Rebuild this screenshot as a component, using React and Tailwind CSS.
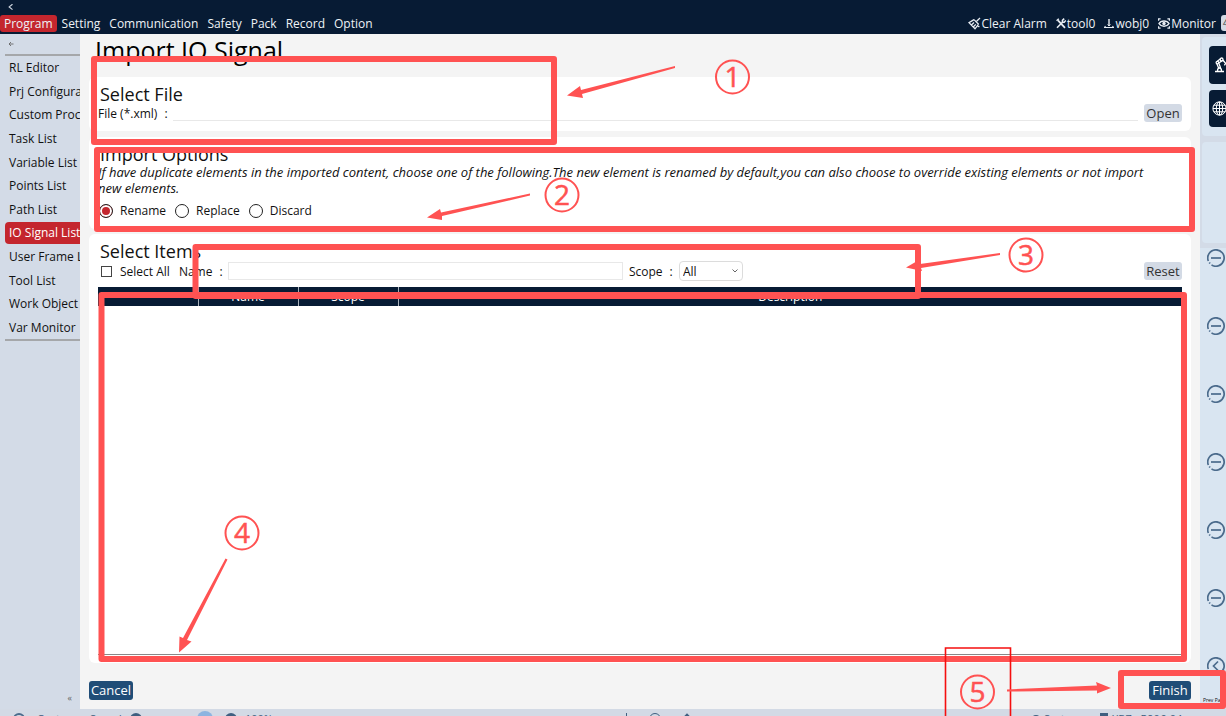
import React from "react";

const MENU = ["Program", "Setting", "Communication", "Safety", "Pack", "Record", "Option"];

const SIDE = [
  "RL Editor",
  "Prj Configuration",
  "Custom Process",
  "Task List",
  "Variable List",
  "Points List",
  "Path List",
  "IO Signal List",
  "User Frame List",
  "Tool List",
  "Work Object List",
  "Var Monitor",
];

function BroomIcon() {
  return (
    <svg width="13" height="13" viewBox="0 0 13 13" fill="none" stroke="#e8edf3" strokeWidth="1.3" aria-hidden="true">
      <path d="M12 1L8.6 4.2M6 2.6L10.6 7.2M6 2.6L1 5.6L7 11.8L10.6 7.2M3.4 8L6 5.6M5.200 10L7.800 7.400" />
      <path d="M9.5 9.500h2" />
    </svg>
  );
}

function ToolsIcon() {
  return (
    <svg width="10" height="11" viewBox="0 0 10 11" fill="none" stroke="#e8edf3" aria-hidden="true">
      <path d="M2 2.4L9 9.8" strokeWidth="1.8" />
      <path d="M1 9.8L6.8 4" strokeWidth="1.6" />
      <path d="M.6 2.8L2.8 .8M8.2 .6L6.4 2.4V4.200H8.2L9.8 2.4" strokeWidth="1.5" />
    </svg>
  );
}

function WobjIcon() {
  return (
    <svg width="10" height="11" viewBox="0 0 10 11" fill="none" stroke="#e8edf3" aria-hidden="true">
      <path d="M5 1V8" strokeWidth="1.400" />
      <path d="M3.600 6.500L5 8L6.400 6.500" strokeWidth="1" />
      <path d="M1.500 8L.5 9.500H9.500L8.500 8" strokeWidth="1.200" />
    </svg>
  );
}

function EyeIcon() {
  return (
    <svg width="12" height="11" viewBox="0 0 12 11" fill="none" stroke="#e8edf3" aria-hidden="true">
      <path d="M.6 2.8V.8H2.6M9.4 .8h2v2M11.4 8.2v2h-2M2.6 10.2h-2v-2" strokeWidth="1.2" />
      <path d="M1 5.5C3 2 9 2 11 5.5C9 9 3 9 1 5.5Z" strokeWidth="1.5" />
      <circle cx="6" cy="5.5" r="1.7" fill="#e8edf3" stroke="none" />
    </svg>
  );
}

function RobotIcon() {
  return (
    <svg width="20" height="18" viewBox="0 0 20 18" fill="none" stroke="#fff" strokeWidth="1.3" aria-hidden="true" className="shrink-0">
      <path d="M2 15.500h9" strokeWidth="1.600" />
      <path d="M4.500 15c0-2 .8-3 2-3s2 1 2 3M5.600 12L3.800 7.500M7.600 12L5.600 6.600M4 5.600L7.500 2.800M5.600 7L9.400 4.600" />
      <circle cx="4.400" cy="6.600" r="1.300" fill="#071b34" />
      <circle cx="8.600" cy="3.400" r="1.400" fill="#071b34" />
      <path d="M9.800 4L12.600 7.400M12.600 7.400l-1.200 2M12.600 7.400l2.400 .6" />
    </svg>
  );
}

function GlobeIcon() {
  return (
    <svg width="15" height="15" viewBox="0 0 15 15" fill="none" stroke="#fff" strokeWidth="1" aria-hidden="true" className="shrink-0">
      <circle cx="7.500" cy="7.500" r="6.600" />
      <ellipse cx="7.500" cy="7.500" rx="3.200" ry="6.600" />
      <path d="M7.500 1v13M1 7.500h13M1.900 4.200h11.200M1.900 10.800h11.200" />
    </svg>
  );
}

function AxisIcon({ back }) {
  return (
    <svg width="18" height="18" viewBox="0 0 18 18" fill="none" stroke="#4b6b8c" strokeWidth="1.7" aria-hidden="true" className="shrink-0">
      <path d="M1.300 12A8.200 8.200 0 1 1 4.500 15.900" />
      <path d="M2.300 13.600l.700 .900" />
      {back ? <path d="M11 4.500L6.500 9L11 13.500" /> : <path d="M4 9h10" />}
    </svg>
  );
}

function Card({ title, className = "", children }) {
  return (
    <section className={"rounded-md bg-white px-[9px] " + className}>
      <h2 className="pl-[2px] text-[18px] leading-[18px]">{title}</h2>
      {children}
    </section>
  );
}

function GrayButton({ children }) {
  return (
    <button type="button" className="h-[18px] w-[38px] shrink-0 rounded-[3px] bg-[#d3dae5] text-center text-[13px] leading-[18px] text-[#333]">
      {children}
    </button>
  );
}

function Radio({ label, checked }) {
  return (
    <label className="flex items-center gap-[7px]">
      <input
        type="radio"
        name="duplicate"
        defaultChecked={checked}
        className="size-[14px] appearance-none rounded-full border border-[#222] bg-white checked:bg-[#c4262e] checked:shadow-[inset_0_0_0_2px_white]"
      />
      {label}
    </label>
  );
}

function FieldLabel({ htmlFor, className, children }) {
  return (
    <label htmlFor={htmlFor} className={"flex shrink-0 gap-[7px] whitespace-nowrap " + className}>
      <span>{children}</span>
      <span>:</span>
    </label>
  );
}

function Annotations() {
  const marks = [
    [732.5, 77, "1"],
    [562, 195, "2"],
    [1026, 255, "3"],
    [242, 533, "4"],
    [977.5, 692, "5"],
  ];
  const boxes = [
    [94, 59, 460, 83],
    [97, 150, 1095, 79],
    [195.5, 247, 722.5, 49],
    [101.5, 295, 1082.5, 364],
    [1121, 673, 102, 33],
  ];
  return (
    <svg width="1226" height="716" viewBox="0 0 1226 716" className="pointer-events-none absolute top-0 left-0" aria-hidden="true">
      <g fill="none" stroke="#ff5252" strokeWidth="6" strokeLinejoin="round">
        {boxes.map((b) => (
          <rect key={b[0]} x={b[0]} y={b[1]} width={b[2]} height={b[3]} />
        ))}
      </g>
      <path d="M945.500 716V648H1010.500V716" fill="none" stroke="#f50f0f" strokeWidth="1.600" />
      <g fill="#ff5252">
        <polygon points="675,66 675,68 582,94 583,98 567,95.500 580,86 581,90" />
        <polygon points="530,193.500 530,195.500 442,216 442,220 427,217.500 440,209 441,212.500" />
        <polygon points="1000,253 1000,255 921,268 922,271 906,267.500 919,260 920,264" />
        <polygon points="225.500,558.500 227.500,559.500 187,640 191.500,641.500 179,652.500 179.500,636.500 183,638" />
        <polygon points="1007,689.500 1007,691.500 1097,690.500 1097,693.500 1111,688 1096,682 1097,685.500" />
      </g>
      {marks.map(([x, y, n]) => (
        <g key={n}>
          <circle cx={x} cy={y} r="16.500" fill="none" stroke="#ff5252" strokeWidth="2" />
          <text x={x} y={y + 10} textAnchor="middle" fontSize="28" fontWeight="500" fill="#ff5252" stroke="#ff5252" strokeWidth=".5">
            {n}
          </text>
        </g>
      ))}
    </svg>
  );
}

export default function App() {
  return (
    <div className="relative flex h-screen flex-col overflow-hidden bg-[#f4f4f4] font-['Open_Sans','Noto_Sans',sans-serif] text-[12px] leading-[17px] text-[#111]">
      <header className="h-[34px] shrink-0 overflow-hidden bg-[#071b34] text-[#eef2f6]">
        <div className="flex h-[15px] items-center pl-2">
          <svg width="6" height="8" viewBox="0 0 6 8" fill="none" stroke="#cdd5de" strokeWidth="1.2" aria-hidden="true">
            <path d="M4.500 .2L1.200 2.900L4.500 5.600" />
          </svg>
        </div>
        <div className="flex h-[17px] items-center justify-between whitespace-nowrap">
          <nav className="flex gap-px">
            {MENU.map((m, i) => (
              <a key={m} href="#" className={"rounded-[3px] px-1 " + (i === 0 ? "bg-[#c4262e]" : "")}>
                {m}
              </a>
            ))}
          </nav>
          <div className="flex items-center gap-[9px]">
            <button type="button" className="flex items-center gap-px"><BroomIcon />Clear Alarm</button>
            <button type="button" className="flex items-center gap-px"><ToolsIcon />tool0</button>
            <button type="button" className="flex items-center gap-px"><WobjIcon />wobj0</button>
            <div className="flex gap-[5px]">
              <button type="button" className="flex items-center gap-px"><EyeIcon />Monitor</button>
              <button type="button" className="h-4 w-[5px] overflow-hidden rounded-l-[3px] bg-[#d3dae5] pl-[2px] text-[9px] leading-4 text-[#333]">4</button>
            </div>
          </div>
        </div>
      </header>

      <div className="flex min-h-0 flex-1">
        <aside className="flex w-20 shrink-0 flex-col overflow-hidden bg-[#d3dbe7] pl-[5px]">
          <div className="flex h-5 items-center pl-[3px]">
            <svg width="6" height="6" viewBox="0 0 6 6" fill="none" stroke="#666" strokeWidth=".9" aria-hidden="true">
              <path d="M5.500 3H1M3 1L1 3L3 5" />
            </svg>
          </div>
          <nav className="grid h-[287px] grid-rows-12 border-y-2 border-[#a5a7aa]">
            {SIDE.map((s) => (
              <a
                key={s}
                href="#"
                className={
                  "my-px flex items-center rounded-l-[4px] pl-[4px] whitespace-nowrap " +
                  (s === "IO Signal List" ? "bg-[#c4262e] text-white" : "")
                }
              >
                {s}
              </a>
            ))}
          </nav>
          <div className="mt-auto mb-[3px] pr-2 text-right text-[9px] leading-4 text-[#666]">«</div>
        </aside>

        <main className="flex min-w-0 flex-1 flex-col px-[9px]">
          <h1 className="h-[43px] shrink-0 pl-[6px] text-[25px] leading-8 text-black">Import IO Signal</h1>

          <Card title="Select File" className="h-[54px] shrink-0 pt-2">
            <div className="mt-px flex h-[18px] items-center">
              <FieldLabel htmlFor="file" className="w-[75px]">File (*.xml)</FieldLabel>
              <input id="file" className="h-4 min-w-0 flex-1 border-b border-[#e8e8e8] outline-none" />
              <div className="ml-[6px] flex"><GrayButton>Open</GrayButton></div>
            </div>
          </Card>

          <Card title="Import Options" className="mt-[6px] h-[92px] shrink-0 pt-2">
            <p className="mt-px pr-4 text-[13px] leading-4 italic">
              If have duplicate elements in the imported content, choose one of the following.The new element is renamed by default,you can also choose to override existing elements or not import new elements.
            </p>
            <fieldset className="mt-[6px] flex gap-[9px] pl-px">
              <Radio label="Rename" checked />
              <Radio label="Replace" />
              <Radio label="Discard" />
            </fieldset>
          </Card>

          <Card title="Select Items" className="mt-[5px] flex min-h-0 flex-1 flex-col pt-2">
            <div className="mt-px flex h-5 items-center">
              <label className="mr-[9px] flex items-center gap-2 pl-[3px]">
                <input type="checkbox" className="size-[11px] appearance-none border border-[#444] bg-white checked:bg-[#c4262e]" />
                Select All
              </label>
              <FieldLabel htmlFor="name" className="w-[49px]">Name</FieldLabel>
              <input id="name" className="h-[18px] w-[395px] border border-[#e8e8e8] px-1 outline-none" />
              <FieldLabel htmlFor="scope" className="ml-[6px] w-[50px]">Scope</FieldLabel>
              <div className="relative">
                <select id="scope" className="block h-5 w-16 appearance-none rounded-[4px] border border-[#dcdcdc] bg-white pl-[3px]">
                  <option>All</option>
                </select>
                <svg width="6" height="4" viewBox="0 0 6 4" fill="none" stroke="#666" className="pointer-events-none absolute top-2 right-[5px]" aria-hidden="true">
                  <path d="M.5 .5L3 3L5.500 .5" />
                </svg>
              </div>
              <div className="ml-auto flex"><GrayButton>Reset</GrayButton></div>
            </div>
            <div className="mt-[6px] mb-2 min-h-0 flex-1 border-b border-[#888]">
              <table className="w-full table-fixed border-collapse bg-[#071b34] text-white">
                <thead>
                  <tr className="h-[19px]">
                    <th className="w-[100px] border-r border-[#a9b1bb]" />
                    <th className="w-[100px] border-r border-[#a9b1bb] p-0 font-normal">Name</th>
                    <th className="w-[100px] border-r border-[#a9b1bb] p-0 font-normal">Scope</th>
                    <th className="p-0 font-normal">Description</th>
                  </tr>
                </thead>
              </table>
            </div>
          </Card>

          <div className="flex h-[46px] shrink-0 items-start justify-between pt-[18px] text-[13px] text-white">
            <button type="button" className="h-[19px] w-11 rounded-[3px] bg-[#204d77] leading-[19px]">Cancel</button>
            <button type="button" className="h-[19px] w-[42px] rounded-[3px] bg-[#204d77] leading-[19px]">Finish</button>
          </div>
        </main>

        <aside className="flex w-[26px] shrink-0 flex-col overflow-hidden bg-[#d9e5f1]">
          <div className="flex shrink-0 flex-col gap-[6px] bg-[#d3dbe7] pt-[3px] pb-[5px] pl-[2px]">
            <div className="flex h-[99px] flex-col gap-[6px] rounded-l-[4px] bg-[#d9e5f1] pt-[9px] pl-[7px]">
              <button type="button" aria-label="Robot" className="flex h-[38px] items-center overflow-hidden rounded-l-[4px] bg-[#071b34] pl-1"><RobotIcon /></button>
              <button type="button" aria-label="World" className="flex h-[37px] items-center overflow-hidden rounded-l-[4px] bg-[#071b34] pl-[3px]"><GlobeIcon /></button>
            </div>
            <div className="h-[101px] rounded-l-[4px] bg-[#d9e5f1]" />
          </div>
          <div className="flex flex-col gap-[50px] pt-px pl-[7px]">
            {[0, 1, 2, 3, 4, 5].map((i) => (
              <button key={i} type="button" aria-label="Jog" className="flex"><AxisIcon /></button>
            ))}
            <button type="button" aria-label="Back" className="flex"><AxisIcon back /></button>
          </div>
          <span className="mt-[17px] shrink-0 pl-[3px] text-[5px] leading-4 whitespace-nowrap text-[#111]">Prev Page</span>
        </aside>
      </div>

      <footer className="h-[7px] shrink-0 overflow-hidden bg-[#d3dae5] text-[11px] leading-4 text-[#3f5f80]">
        <div className="flex h-5 items-center whitespace-nowrap">
          <span className="ml-[13px] size-3 shrink-0 rounded-full border-2 border-[#4b6b8c]" />
          <span className="ml-3 w-[53px]">Custom</span>
          <span className="w-10">Speed</span>
          <span className="size-3 shrink-0 rounded-full bg-[#3f5f80]" />
          <span className="ml-[55px] size-4 shrink-0 rounded-full bg-[#8db4e0]" />
          <span className="ml-3 size-3 shrink-0 rounded-full bg-[#3f5f80]" />
          <span className="ml-2">100%</span>
          <div className="ml-auto flex w-[406px] items-center gap-[22px]">
            <span className="h-3 w-px bg-[#3f5f80]" />
            <span className="size-3 rounded-full border border-[#3f5f80]" />
            <span className="size-2 rotate-45 bg-[#3f5f80]" />
          </div>
          <div className="flex w-[194px] items-center">
            <span className="mr-1 size-2 rounded-full bg-[#3f5f80]" />
            <span className="w-[56px]">System</span>
            <span className="mr-1 h-3 w-2 bg-[#3f5f80]" />
            XB7s-R906-04
          </div>
        </div>
      </footer>
      <Annotations />
    </div>
  );
}
